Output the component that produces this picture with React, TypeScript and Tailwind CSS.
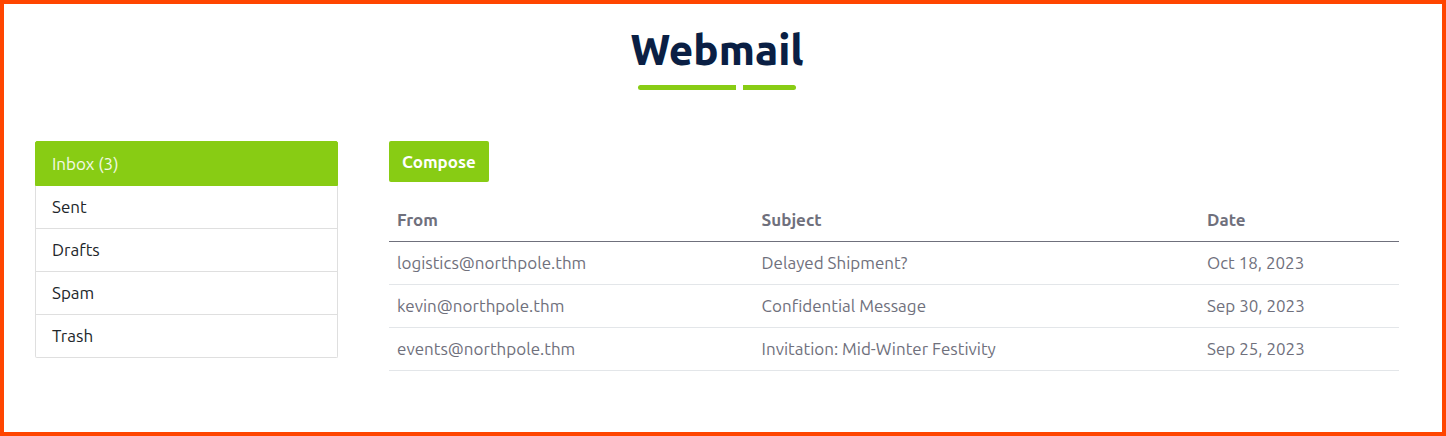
type Folder = { label: string; active?: boolean };
type Mail = { from: string; subject: string; date: string };

const folders: Folder[] = [
  { label: "Inbox (3)", active: true },
  { label: "Sent" },
  { label: "Drafts" },
  { label: "Spam" },
  { label: "Trash" },
];

const mails: Mail[] = [
  { from: "logistics@northpole.thm", subject: "Delayed Shipment?", date: "Oct 18, 2023" },
  { from: "kevin@northpole.thm", subject: "Confidential Message", date: "Sep 30, 2023" },
  { from: "events@northpole.thm", subject: "Invitation: Mid-Winter Festivity", date: "Sep 25, 2023" },
];

function Title() {
  return (
    <header className="flex flex-col items-center">
      <h1 className="text-[42px] leading-[52px] font-extrabold text-[#0a1f44]">Webmail</h1>
      <div className="mt-[9px] flex gap-[7px]">
        <span className="h-[5px] w-[98px] rounded-l-full bg-[#88cc14]" />
        <span className="h-[5px] w-[53px] rounded-r-full bg-[#88cc14]" />
      </div>
    </header>
  );
}

function Folders() {
  return (
    <nav aria-label="Folders" className="flex flex-col self-start">
      {folders.map(({ label, active }) => (
        <a
          key={label}
          href="#"
          aria-current={active ? "page" : undefined}
          className={
            active
              ? "rounded-t-xs border border-[#88cc14] bg-[#88cc14] px-4 pt-[11px] pb-[10px] leading-[22px] text-white/90"
              : "border border-t-0 border-[#dfdfdf] px-4 py-[10px] leading-[22px] text-[#212529] last:rounded-b-xs"
          }
        >
          {label}
        </a>
      ))}
    </nav>
  );
}

function Inbox() {
  return (
    <main className="min-w-0">
      <button type="button" className="h-[41px] rounded-xs bg-[#88cc14] px-[13px] leading-[22px] font-bold text-white">
        Compose
      </button>
      <table className="mt-4 w-full table-fixed text-left text-[#6f707c]">
        <thead>
          <tr className="border-b border-[#6f707c]">
            <th className="w-[36.1%] px-2 py-[10px] leading-[23px] font-bold">From</th>
            <th className="w-[44.1%] px-2 py-[10px] leading-[23px] font-bold">Subject</th>
            <th className="px-2 py-[10px] leading-[23px] font-bold">Date</th>
          </tr>
        </thead>
        <tbody>
          {mails.map((mail) => (
            <tr key={mail.from} className="border-b border-[#e3e6e9]">
              <td className="px-2 py-[10px] leading-[22px]">{mail.from}</td>
              <td className="px-2 py-[10px] leading-[22px]">{mail.subject}</td>
              <td className="px-2 py-[10px] leading-[22px]">{mail.date}</td>
            </tr>
          ))}
        </tbody>
      </table>
    </main>
  );
}

export default function App() {
  return (
    <div className="min-h-screen border-4 border-[#ff4500] bg-white pt-5 pr-[43px] pb-8 pl-[31px] font-['Ubuntu','Noto_Sans',sans-serif] text-[17px]">
      <Title />
      <div className="mt-[51px] grid grid-cols-[3fr_10fr] gap-[51px]">
        <Folders />
        <Inbox />
      </div>
    </div>
  );
}
